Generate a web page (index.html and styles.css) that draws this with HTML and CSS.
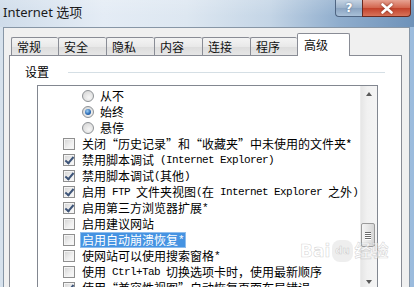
FILE: index.html
```html
<!DOCTYPE html>
<html lang="zh-CN">
<head>
<meta charset="utf-8">
<title>Internet 选项</title>
<link rel="stylesheet" href="styles.css">
</head>
<body>
<div class="window">
  <div class="titlebar">
    <span class="title">Internet 选项</span>
    <div class="caption">
      <div class="cbtn help">?</div>
      <div class="cbtn close">
        <svg width="14" height="11" viewBox="0 0 14 11"><path d="M2.5 1.5 L11.5 9.5 M11.5 1.5 L2.5 9.5" stroke="#fff" stroke-width="2.6" stroke-linecap="round"/></svg>
      </div>
    </div>
  </div>
  <div class="frame">
    <div class="client">
      <div class="tabs">
        <div class="tab w47">常规</div>
        <div class="tab">安全</div>
        <div class="tab">隐私</div>
        <div class="tab">内容</div>
        <div class="tab">连接</div>
        <div class="tab w47">程序</div>
        <div class="tab active">高级</div>
      </div>
      <div class="panel">
        <div class="ghead"><span>设置</span><div class="rule"></div></div>
        <div class="listbox">
          <div class="items">
            <div class="row radio"><span class="rb"></span>从不</div>
            <div class="row radio"><span class="rb on"></span>始终</div>
            <div class="row radio"><span class="rb"></span>悬停</div>
            <div class="row check"><span class="cb"></span>关闭“历史记录”和“收藏夹”中未使用的文件夹*</div>
            <div class="row check"><span class="cb on"></span>禁用脚本调试<span class="m"> (Internet Explorer)</span></div>
            <div class="row check"><span class="cb on"></span>禁用脚本调试<span class="m">(</span>其他<span class="m">)</span></div>
            <div class="row check"><span class="cb on"></span>启用<span class="m"> FTP </span>文件夹视图<span class="m">(</span>在<span class="m"> Internet Explorer </span>之外<span class="m">)</span></div>
            <div class="row check"><span class="cb on"></span>启用第三方浏览器扩展<span class="m">*</span></div>
            <div class="row check"><span class="cb"></span>启用建议网站</div>
            <div class="row check"><span class="cb"></span><span class="sel">启用自动崩溃恢复<span class="m">*</span></span></div>
            <div class="row check"><span class="cb"></span>使网站可以使用搜索窗格<span class="m">*</span></div>
            <div class="row check"><span class="cb"></span>使用<span class="m"> Ctrl+Tab </span>切换选项卡时，使用最新顺序</div>
            <div class="row check"><span class="cb on"></span>使用“兼容性视图”自动恢复页面布局错误</div>
          </div>
          <div class="scrollbar">
            <div class="sbtn"><span class="arrow up"></span></div>
            <div class="track-top"></div>
            <div class="thumb"><span class="grip"></span><span class="grip"></span><span class="grip"></span><span class="grip"></span></div>
            <div class="track-rest"></div>
            <div class="sbtn"><span class="arrow down"></span></div>
          </div>
        </div>
      </div>
    </div>
  </div>
  <div class="watermark">
    <div class="wm-main">Bai<span class="paw">du</span>经验</div>
  </div>
</div>
</body>
</html>
```
FILE: styles.css
```css
* { box-sizing: border-box; margin: 0; padding: 0; }
html, body { width: 414px; height: 287px; overflow: hidden; }
body {
  font-family: "Noto Sans CJK SC", sans-serif;
  font-size: 12px;
  color: #000;
  background: #c9d9ea;
}
.window {
  position: relative;
  width: 414px;
  height: 290px;
  display: flex;
  flex-direction: column;
}
.titlebar {
  height: 27px;
  display: flex;
  align-items: flex-start;
  background:
    linear-gradient(to bottom, rgba(255,255,255,0.15), rgba(255,255,255,0) 60%),
    linear-gradient(to right, #cfdcea 0%, #e4ecf5 25%, #dde7f1 45%, #c4d5e6 65%, #8fadcd 82%, #6e92b9 100%);
}
.title {
  padding: 4px 0 0 3px;
  font-family: "Noto Sans", "Noto Sans CJK SC", sans-serif;
  font-size: 13px;
  line-height: 16px;
  color: #1b1b1b;
}
.caption {
  margin-left: auto;
  margin-right: 3px;
  display: flex;
}
.cbtn {
  height: 17px;
  display: flex;
  align-items: center;
  justify-content: center;
  border: 1px solid #4f6582;
  border-top: none;
}
.help {
  width: 27px;
  border-radius: 0 0 0 4px;
  border-right: none;
  background: linear-gradient(to bottom, #c3d2e2, #9cb2ca 50%, #8aa3c0 51%, #a9c0d8);
  color: #fff;
  font-family: "DejaVu Sans", sans-serif;
  font-weight: bold;
  font-size: 12px;
  text-shadow: 0 0 2px #4b6584;
}
.close {
  width: 49px;
  border-radius: 0 0 4px 0;
  border-color: #6a2a20;
  background: linear-gradient(to bottom, #e7a393, #d2644c 50%, #c2412a 51%, #d8735a);
}
.close svg { filter: drop-shadow(0 0 1px #7a2a1c); }

.frame {
  flex: 1;
  display: flex;
  min-height: 0;
  background: linear-gradient(to right, #d6e1ec, #c9d8e8 50%, #9bbbdd);
}
.client {
  flex: 1;
  margin-left: 3px;
  margin-right: 4px;
  background: #f0f0f0;
  border: 1px solid #8796a6;
  border-bottom: none;
  padding-top: 5px;
  display: flex;
  flex-direction: column;
  min-height: 0;
}
.tabs {
  display: flex;
  align-items: flex-end;
  height: 22px;
  padding-left: 7px;
}
.tab {
  width: 48px;
  height: 18px;
  border: 1px solid #898c95;
  border-right: none;
  border-bottom: none;
  border-radius: 2px 2px 0 0;
  background: linear-gradient(to bottom, #f4f4f4, #e9e9e9 50%, #dcdcdc 51%, #e6e6e6);
  padding: 1px 0 0 5px;
  line-height: 16px;
  font-size: 12px;
  color: #111;
}
.tab.w47 { width: 47px; }
.tab.active {
  width: 53px;
  height: 23px;
  margin-bottom: -1px;
  background: #fff;
  border-right: 1px solid #898c95;
  padding: 3px 0 0 6px;
  position: relative;
  z-index: 1;
}
.panel {
  flex: 1;
  margin: 0 7px 0 5px;
  border: 1px solid #898c95;
  border-bottom: none;
  background: #fff;
  padding: 8px 16px 0 15px;
  display: flex;
  flex-direction: column;
  min-height: 0;
}
.ghead {
  display: flex;
  align-items: center;
  height: 16px;
  line-height: 16px;
}
.ghead .rule {
  flex: 1;
  height: 1px;
  background: #d5dfe5;
  margin-left: 19px;
}
.listbox {
  flex: 1;
  display: flex;
  margin: 5px 7px 0 12px;
  border: 1px solid #828790;
  border-bottom: none;
  min-height: 0;
}
.items {
  flex: 1;
  padding-top: 2px;
  overflow: hidden;
}
.row {
  height: 16px;
  display: flex;
  align-items: center;
  white-space: nowrap;
  line-height: 16px;
}
.row.radio { padding-left: 44px; }
.row.check { padding-left: 25px; }
.m {
  font-family: "Liberation Mono", monospace;
  font-size: 11px;
  letter-spacing: -0.6px;
  white-space: pre;
}
.rb {
  flex: none;
  width: 12px;
  height: 12px;
  border-radius: 50%;
  margin-right: 6px;
  border: 1px solid #8d9195;
  background: radial-gradient(circle at 60% 65%, #f6f6f6 0%, #dcdcdc 70%, #cfcfcf 100%);
  display: flex;
  align-items: center;
  justify-content: center;
}
.rb.on::after {
  content: "";
  width: 6px;
  height: 6px;
  border-radius: 50%;
  background: radial-gradient(circle at 40% 35%, #9fd0f5 0%, #2f6fb8 55%, #123f7a 100%);
}
.cb {
  flex: none;
  width: 12px;
  height: 12px;
  margin-right: 7px;
  border: 1px solid #8f8f8f;
  background: linear-gradient(135deg, #d2d2d2, #f0f0f0 60%, #fafafa);
  box-shadow: inset 0 0 0 1px #f4f4f4;
  position: relative;
}
.cb.on::after {
  content: "";
  position: absolute;
  left: 2px;
  top: 0px;
  width: 3px;
  height: 7px;
  border: solid #3d5478;
  border-width: 0 2px 2px 0;
  transform: rotate(40deg);
  transform-origin: 50% 50%;
  margin-left: 1px;
}
.sel {
  display: flex;
  align-items: center;
  height: 16px;
  background: #4593e2;
  color: #fff;
  margin-left: -2px;
  padding: 0 2px;
  box-shadow: inset 0 0 0 1px #8fbdec;
}

.scrollbar {
  width: 17px;
  flex: none;
  display: flex;
  flex-direction: column;
  background: linear-gradient(to right, #e6e6e6, #f1f1f1 40%, #f4f4f4);
  border-left: 1px solid #ececec;
}
.sbtn {
  height: 16px;
  flex: none;
  display: flex;
  align-items: center;
  justify-content: center;
}
.arrow {
  width: 0;
  height: 0;
  border-left: 3px solid transparent;
  border-right: 3px solid transparent;
}
.arrow.up { border-bottom: 4px solid #5a5a5a; }
.arrow.down { border-top: 4px solid #5a5a5a; }
.track-top { height: 121px; flex: none; }
.track-rest { flex: 1; }
.thumb {
  flex: none;
  height: 24px;
  margin: 0 2px 0 0;
  border: 1px solid #9a9a9a;
  border-radius: 2px;
  background: linear-gradient(to right, #f4f4f4, #e6e6e6 50%, #d6d6d6);
  display: flex;
  flex-direction: column;
  align-items: center;
  justify-content: center;
  gap: 1px;
}
.grip {
  width: 6px;
  height: 1px;
  background: #6b6b6b;
  box-shadow: 0 1px 0 #fff;
}

.watermark {
  position: absolute;
  left: 300px;
  top: 240px;
  pointer-events: none;
  color: rgba(255,255,255,0.55);
  -webkit-text-stroke: 0.6px rgba(150,150,150,0.4);
}
.wm-main {
  font-family: "DejaVu Sans", "Noto Sans CJK SC", sans-serif;
  font-weight: bold;
  font-size: 17px;
  line-height: 18px;
  display: flex;
  align-items: center;
}
.paw {
  font-size: 10px;
  margin: 0 2px;
  padding: 2px 3px;
  border-radius: 8px;
  background: rgba(160,160,160,0.18);
}
```
